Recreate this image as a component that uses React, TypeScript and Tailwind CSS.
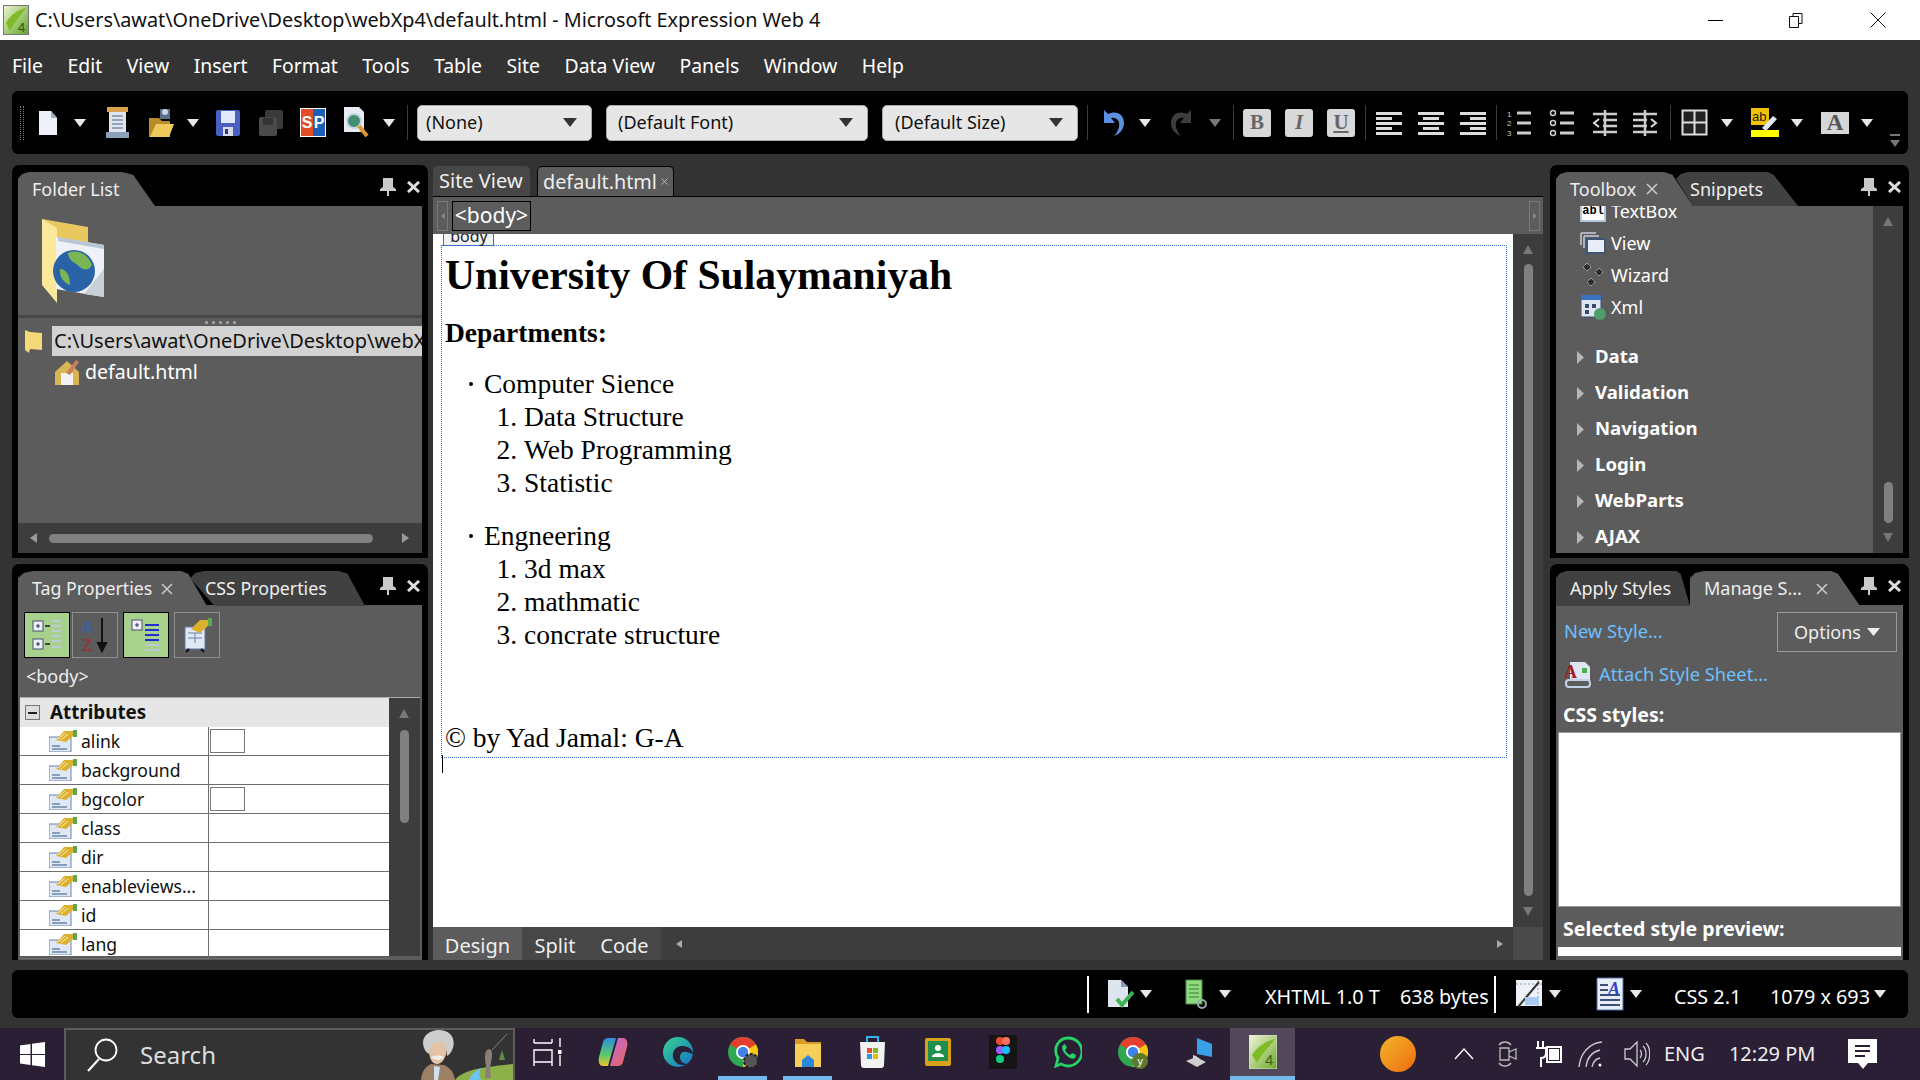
import type { ReactNode } from 'react';

function Caret({ className = 'ml-0', dim = false }: { className?: string; dim?: boolean }) {
  return (
    <svg width="12" height="10" viewBox="0 0 12 10" className={`shrink-0 ${className}`}>
      <path d="M0 1h12L6 9z" fill={dim ? '#777' : '#e8e8e8'} />
    </svg>
  );
}

function Sep({ className }: { className: string }) {
  return <div className={`h-[35px] w-px shrink-0 bg-[#3a3a3a] ${className}`} />;
}

function Combo({ label, className }: { label: string; className: string }) {
  return (
    <div className={`flex h-[36px] shrink-0 items-center justify-between rounded-[5px] border border-[#aaa] bg-[#e6e6e6] pr-[14px] text-[18px] text-[#111] ${className}`}>
      <span>{label}</span>
      <svg width="14" height="11" viewBox="0 0 14 11"><path d="M0 1h14L7 10z" fill="#333" /></svg>
    </div>
  );
}

function Lines({ className, rows }: { className: string; rows: [number, number][] }) {
  return (
    <svg width="26" height="26" viewBox="0 0 26 26" className={`shrink-0 ${className}`}>
      {rows.map(([x, w], i) => (
        <rect key={i} x={x} y={2 + i * 5} width={w} height="3" fill="#ddd" />
      ))}
    </svg>
  );
}

function Lettered({ letter, cls, className }: { letter: string; cls: string; className: string }) {
  return (
    <div className={`flex h-[28px] w-[28px] shrink-0 items-center justify-center rounded-[3px] bg-[#d9d9d9] font-['Liberation_Serif',serif] text-[21px] leading-none text-[#666] ${cls} ${className}`}>
      {letter}
    </div>
  );
}

function PagesIcon({ className }: { className: string }) {
  return (
    <svg width="20" height="26" viewBox="0 0 20 26" className={`shrink-0 ${className}`}>
      <path d="M1 1h12l6 7v17H1z" fill="#eef2f8" />
      <path d="M13 1l6 7h-6z" fill="#9fb0c6" />
    </svg>
  );
}

function Toolbar() {
  return (
    <div className="mx-3 flex h-[63px] shrink-0 items-center rounded-[6px] bg-black">
      <div className="ml-2 h-[34px] w-1 shrink-0 border-x border-dotted border-[#777]" />
      <PagesIcon className="ml-[14px]" />
      <Caret className="ml-[16px]" />
      <svg width="25" height="33" viewBox="0 0 25 33" className="ml-[19px] shrink-0">
        <rect x="2" y="1" width="21" height="5" fill="#d9a04f" />
        <rect x="4" y="6" width="17" height="20" fill="#dfe5ee" />
        <path d="M7 10h11M7 14h11M7 18h11M7 22h11" stroke="#7d8ea5" strokeWidth="1.5" />
        <rect x="1" y="26" width="23" height="6" fill="#8ca0ba" />
      </svg>
      <svg width="28" height="33" viewBox="0 0 28 33" className="ml-[17px] shrink-0">
        <path d="M2 12h10l3 3h8v16H2z" fill="#b88a2a" />
        <path d="M3 31l6-13h18l-5 13z" fill="#f0c95c" />
        <rect x="13" y="3" width="10" height="10" fill="#5d6f87" />
        <circle cx="18" cy="6" r="3" fill="#c9d4e4" />
      </svg>
      <Caret className="ml-[12px]" />
      <svg width="26" height="28" viewBox="0 0 26 28" className="ml-[16px] shrink-0">
        <rect x="1" y="1" width="24" height="26" rx="2" fill="#4a5fc2" />
        <rect x="6" y="2" width="14" height="12" fill="#e3e9fb" />
        <rect x="8" y="18" width="10" height="9" fill="#d6dbe8" />
        <rect x="10" y="20" width="3" height="5" fill="#2c3a80" />
      </svg>
      <svg width="26" height="28" viewBox="0 0 26 28" className="ml-[17px] shrink-0">
        <rect x="7" y="1" width="18" height="19" rx="2" fill="#3a3a3a" />
        <rect x="1" y="8" width="18" height="19" rx="2" fill="#4a4a4a" />
        <rect x="5" y="9" width="10" height="7" fill="#333" />
      </svg>
      <div className="ml-[16px] flex h-[29px] w-[26px] shrink-0 items-center overflow-hidden border border-white bg-[#e34d26] font-['Liberation_Sans',sans-serif] text-[16px] font-bold leading-none text-white">
        <span className="flex h-full w-1/2 items-center justify-center">S</span>
        <span className="flex h-full w-1/2 items-center justify-center bg-[#1c5fb8]">P</span>
      </div>
      <svg width="27" height="33" viewBox="0 0 27 33" className="ml-[17px] shrink-0">
        <path d="M1 1h15l5 5v20H1z" fill="#e8edf4" />
        <circle cx="11" cy="15" r="7" fill="#3f8f6e" stroke="#c5d2e2" strokeWidth="2" />
        <path d="M16 20l8 10" stroke="#d89a2c" strokeWidth="4" />
      </svg>
      <Caret className="ml-[13px]" />
      <Sep className="ml-[12px]" />
      <Combo label="(None)" className="ml-[9px] w-[175px] pl-2" />
      <Combo label="(Default Font)" className="ml-[14px] w-[262px] pl-[11px]" />
      <Combo label="(Default Size)" className="ml-[14px] w-[196px] pl-[12px]" />
      <Sep className="ml-[9px]" />
      <svg width="24" height="30" viewBox="0 0 24 30" className="ml-[13px] shrink-0">
        <path d="M3 2v13h11L10 10c6-1 9 3 8 9-1 4-3 7-5 9 6-2 10-7 10-13C23 6 15 2 7 6z" fill="#5b8fe0" />
      </svg>
      <Caret className="ml-[14px]" />
      <svg width="26" height="30" viewBox="0 0 26 30" className="ml-[18px] shrink-0">
        <path d="M22 2v13H11l4-5C9 9 6 13 7 19c1 4 3 7 5 9C6 26 2 21 2 15 2 6 10 2 18 6z" fill="#3d3d3d" />
      </svg>
      <Caret className="ml-[14px]" dim />
      <Sep className="ml-[12px]" />
      <Lettered letter="B" cls="font-bold" className="ml-[9px]" />
      <Lettered letter="I" cls="font-bold italic" className="ml-[14px]" />
      <Lettered letter="U" cls="font-bold underline" className="ml-[14px]" />
      <Sep className="ml-[10px]" />
      <Lines className="ml-[10px]" rows={[[0, 26], [0, 16], [0, 26], [0, 16], [0, 26]]} />
      <Lines className="ml-[16px]" rows={[[0, 26], [5, 16], [0, 26], [5, 16], [0, 26]]} />
      <Lines className="ml-[16px]" rows={[[0, 26], [10, 16], [0, 26], [10, 16], [0, 26]]} />
      <Sep className="ml-[10px]" />
      <svg width="26" height="28" viewBox="0 0 26 28" className="ml-[10px] shrink-0">
        <path d="M10 4h14M10 14h14M10 24h14" stroke="#ccc" strokeWidth="3" />
        <text x="0" y="8" fontSize="8" fill="#ccc" fontFamily="Liberation Sans">1</text>
        <text x="0" y="17" fontSize="8" fill="#ccc" fontFamily="Liberation Sans">2</text>
        <text x="0" y="27" fontSize="8" fill="#ccc" fontFamily="Liberation Sans">3</text>
      </svg>
      <svg width="26" height="28" viewBox="0 0 26 28" className="ml-[16px] shrink-0">
        <path d="M11 4h14M11 14h14M11 24h14" stroke="#ccc" strokeWidth="3" />
        <circle cx="4" cy="4" r="2.5" fill="none" stroke="#ccc" strokeWidth="1.5" />
        <circle cx="4" cy="14" r="2.5" fill="none" stroke="#ccc" strokeWidth="1.5" />
        <circle cx="4" cy="24" r="2.5" fill="none" stroke="#ccc" strokeWidth="1.5" />
      </svg>
      <svg width="26" height="28" viewBox="0 0 26 28" className="ml-[16px] shrink-0">
        <path d="M2 5h24M12 11h14M12 17h14M2 23h24M14 1v26" stroke="#ccc" strokeWidth="2.5" />
        <path d="M8 10l-5 4 5 4" stroke="#ddd" strokeWidth="2" fill="none" />
      </svg>
      <svg width="26" height="28" viewBox="0 0 26 28" className="ml-[16px] shrink-0">
        <path d="M0 5h24M0 11h14M0 17h14M0 23h24M12 1v26" stroke="#ccc" strokeWidth="2.5" />
        <path d="M18 10l5 4-5 4" stroke="#ddd" strokeWidth="2" fill="none" />
      </svg>
      <Sep className="ml-[11px]" />
      <svg width="27" height="27" viewBox="0 0 27 27" className="ml-[10px] shrink-0">
        <rect x="1.5" y="1.5" width="24" height="24" fill="#222" stroke="#ddd" strokeWidth="2" />
        <path d="M13.5 2v23M2 13.5h23" stroke="#ddd" strokeWidth="2" />
      </svg>
      <Caret className="ml-[13px]" />
      <svg width="28" height="29" viewBox="0 0 28 29" className="ml-[18px] shrink-0">
        <rect x="0" y="0" width="18" height="17" fill="#f2c200" />
        <text x="1" y="13" fontSize="13" fontFamily="Liberation Sans" fill="#222">ab</text>
        <path d="M11 20l11-12 4 3-11 12z" fill="#dfe9fb" />
        <rect x="0" y="22" width="28" height="7" fill="#ffff00" />
      </svg>
      <Caret className="ml-[12px]" />
      <div className="ml-[18px] flex h-[22px] w-[28px] shrink-0 items-center justify-center bg-[#d6d6d6] font-['Liberation_Serif',serif] text-[23px] font-bold leading-none text-[#555]">
        A
      </div>
      <Caret className="ml-[12px]" />
      <svg width="12" height="14" viewBox="0 0 12 14" className="ml-[16px] mt-[36px] shrink-0">
        <path d="M1 1h10" stroke="#777" strokeWidth="2" />
        <path d="M1 6h10L6 13z" fill="#777" />
      </svg>
    </div>
  );
}

function Pin() {
  return (
    <svg width="16" height="18" viewBox="0 0 16 18">
      <path d="M3 0h10v9l3 2v2H0v-2l3-2z" fill="#c9c9c9" />
      <rect x="7" y="13" width="2" height="5" fill="#c9c9c9" />
    </svg>
  );
}

function PanelClose() {
  return (
    <svg width="13" height="12" viewBox="0 0 13 12"><path d="M1 1l11 10M12 1L1 11" stroke="#dedede" strokeWidth="3" /></svg>
  );
}

function TabClose() {
  return (
    <svg width="12" height="12" viewBox="0 0 12 12" className="shrink-0"><path d="M1 1l10 10M11 1L1 11" stroke="#c8c8c8" strokeWidth="1.6" /></svg>
  );
}

function Panel({ tabs, body, className }: { tabs: ReactNode; body: ReactNode; className: string }) {
  return (
    <section className={`flex flex-col rounded-t-[7px] bg-black px-[6px] pt-[7px] ${className}`}>
      <div className="flex h-[34px] shrink-0 items-start justify-between">
        <div className="relative flex h-full">{tabs}</div>
        <div className="flex items-center gap-[11px] pr-[2px] pt-[6px]">
          <Pin />
          <PanelClose />
        </div>
      </div>
      {body}
    </section>
  );
}

function Scrollbar({ thumb, className, noDown = false }: { thumb: string; className: string; noDown?: boolean }) {
  return (
    <div className={`relative w-[30px] shrink-0 bg-[#3d3d3d] ${className}`}>
      <svg width="10" height="9" viewBox="0 0 10 9" className="absolute left-[10px] top-[11px]"><path d="M5 0l5 9H0z" fill="#777" /></svg>
      <div className={`absolute left-[11px] w-[9px] rounded-full bg-[#808080] ${thumb}`} />
      {!noDown && (
        <svg width="10" height="9" viewBox="0 0 10 9" className="absolute bottom-[11px] left-[10px]"><path d="M5 9L0 0h10z" fill="#777" /></svg>
      )}
    </div>
  );
}

function FolderPanel() {
  return (
    <Panel
      className="h-[393px] pb-[5px]"
      tabs={
        <div className="flex h-[34px] w-[137px] items-center bg-[#5c5c5c] pl-[14px] text-[18px] text-[#eee] [clip-path:polygon(0_20%,3%_6%,8%_0,76%_0,84%_8%,100%_100%,0_100%)]">
          Folder List
        </div>
      }
      body={
        <div className="flex min-h-0 flex-1 flex-col bg-[#5c5c5c]">
          <div className="flex h-[112px] shrink-0 border-b-[3px] border-[#474747] pl-6 pt-[13px]">
            <svg width="62" height="84" viewBox="0 0 62 84">
              <path d="M0 0l46 8v60L0 60z" fill="#e9c85f" />
              <path d="M0 0l15 9v75L0 66z" fill="#fbe89b" />
              <path d="M14 18l48 8v52l-48-8z" fill="#eef2f6" />
              <path d="M16 18l46 8v4l-46-8z" fill="#b8c6d6" />
              <path d="M62 50v28l-20-3z" fill="#c9cfd6" />
              <circle cx="32" cy="52" r="21" fill="#2a62a8" />
              <path d="M26 34c8-4 20 0 24 12-3 6-9 5-12 2-4-4-12-6-12-14zM18 50c6 0 10 6 10 16-6-2-11-8-10-16z" fill="#7bb656" />
            </svg>
          </div>
          <div className="flex h-[8px] justify-center gap-[4px] pt-[3px]">
            {[0, 1, 2, 3, 4].map((i) => <div key={i} className="h-[3px] w-[3px] bg-[#9a9a9a]" />)}
          </div>
          <div className="flex h-[30px] shrink-0 items-center pl-[7px]">
            <svg width="18" height="24" viewBox="0 0 18 24" className="shrink-0"><path d="M0 1l5 2 12 1v17L5 20l-1 4-4-3z" fill="#f5d877" /></svg>
            <div className="ml-[9px] flex h-full min-w-0 flex-1 items-center overflow-hidden whitespace-nowrap bg-[#d2d2d2] pl-[2px] text-[20px] text-[#111]">
              C:\Users\awat\OneDrive\Desktop\webX
            </div>
          </div>
          <div className="flex h-[32px] shrink-0 items-center pl-[36px]">
            <svg width="26" height="28" viewBox="0 0 26 28" className="shrink-0">
              <path d="M1 14L13 3l12 11v13H1z" fill="#d8b554" />
              <rect x="7" y="15" width="12" height="12" fill="#f2f2f2" />
              <path d="M12 15L22 2l3 2-9 13z" fill="#c97f5a" />
            </svg>
            <span className="ml-[5px] text-[19.6px] text-white">default.html</span>
          </div>
          <div className="mt-auto flex h-[30px] shrink-0 items-center bg-[#3d3d3d] pl-[12px]">
            <svg width="7" height="10" viewBox="0 0 7 10" className="shrink-0"><path d="M7 0v10L0 5z" fill="#999" /></svg>
            <div className="ml-[12px] h-[9px] w-[324px] rounded-full bg-[#808080]" />
            <svg width="7" height="10" viewBox="0 0 7 10" className="ml-[29px] shrink-0"><path d="M0 0v10l7-5z" fill="#999" /></svg>
          </div>
        </div>
      }
    />
  );
}

function AttrIcon() {
  return (
    <svg width="28" height="22" viewBox="0 0 28 22" className="shrink-0">
      <rect x="0" y="7" width="22" height="15" fill="#dfe8f4" stroke="#6a84a8" />
      <path d="M3 16h8M3 19h15" stroke="#6a84a8" strokeWidth="1.5" />
      <path d="M7 10L15 1h10v4l-8 7z" fill="#dcb02f" />
      <rect x="24" y="0" width="4" height="7" fill="#5fa84a" />
      <path d="M9 9l7-6M12 10l7-6" stroke="#fff2b8" />
    </svg>
  );
}

const attrs: [string, boolean][] = [
  ['alink', true], ['background', false], ['bgcolor', true], ['class', false],
  ['dir', false], ['enableviews...', false], ['id', false], ['lang', false],
];

function PropButton({ on, children, className }: { on: boolean; children: ReactNode; className: string }) {
  return (
    <div className={`flex h-[46px] w-[46px] shrink-0 items-center justify-center border ${on ? 'border-black bg-[#a9d18e]' : 'border-[#8f8f8f]'} ${className}`}>
      {children}
    </div>
  );
}

function TagPanel() {
  return (
    <Panel
      className="h-[396px]"
      tabs={
        <>
          <div className="absolute left-[172px] top-0 flex h-[35px] w-[175px] items-center whitespace-nowrap bg-[#414141] pl-[15px] text-[17.8px] text-[#eee] [clip-path:polygon(0_20%,3%_6%,8%_0,85%_0,90%_8%,100%_100%,14%_100%)]">
            CSS Properties
          </div>
          <div className="relative flex h-[35px] w-[189px] items-center gap-[9px] whitespace-nowrap bg-[#5c5c5c] pl-[14px] text-[17.8px] text-[#eee] [clip-path:polygon(0_20%,3%_6%,8%_0,86%_0,90%_8%,100%_100%,0_100%)]">
            Tag Properties
            <TabClose />
          </div>
        </>
      }
      body={
        <div className="flex min-h-0 flex-1 flex-col overflow-hidden bg-[#5c5c5c] pb-1">
          <div className="flex shrink-0 pl-[6px] pt-[7px]">
            <PropButton on className="">
              <svg width="30" height="36" viewBox="0 0 30 36">
                <rect x="1" y="4" width="10" height="10" fill="#eef" stroke="#456" />
                <rect x="1" y="22" width="10" height="10" fill="#eef" stroke="#456" />
                <path d="M4 9h4M6 7v4M4 27h4M6 25v4" stroke="#234" />
                <path d="M13 9h5M13 27h5" stroke="#444" strokeWidth="2" />
                <path d="M20 4h9M20 9h9M20 14h9M20 19h9M20 24h9M20 30h9" stroke="#b9cdd0" strokeWidth="2" />
              </svg>
            </PropButton>
            <PropButton on={false} className="ml-[2px]">
              <svg width="30" height="36" viewBox="0 0 30 36">
                <text x="1" y="16" fontSize="17" fontWeight="bold" fill="#3e5f9d" fontFamily="Liberation Sans">A</text>
                <text x="2" y="34" fontSize="17" fontWeight="bold" fill="#8c3a3a" fontFamily="Liberation Sans">Z</text>
                <path d="M22 1v30M18 26l4 8 4-8z" stroke="#111" strokeWidth="2" fill="#111" />
              </svg>
            </PropButton>
            <PropButton on className="ml-[5px]">
              <svg width="30" height="32" viewBox="0 0 30 32">
                <rect x="1" y="1" width="10" height="10" fill="#eef" stroke="#456" />
                <path d="M4 6h4M6 4v4" stroke="#234" />
                <path d="M14 6h14M14 11h14M14 16h14M14 21h14" stroke="#1f2fd0" strokeWidth="2" />
                <path d="M14 26h14M14 31h14" stroke="#b9cdd0" strokeWidth="2" />
              </svg>
            </PropButton>
            <PropButton on={false} className="ml-[5px]">
              <svg width="30" height="36" viewBox="0 0 30 36">
                <rect x="3" y="10" width="20" height="22" fill="#dfe8f4" stroke="#5c7ba8" />
                <path d="M6 16h14M6 21h14M13 16v10" stroke="#6a84a8" />
                <path d="M9 12L18 3h9v5l-9 8z" fill="#dcb02f" />
                <rect x="26" y="1" width="4" height="8" fill="#5fa84a" />
                <path d="M7 32l-3 3M19 32l3 3" stroke="#111" strokeWidth="2" />
              </svg>
            </PropButton>
          </div>
          <div className="flex h-[39px] shrink-0 items-center pb-[2px] pl-2 text-[18px] text-[#eee]">&lt;body&gt;</div>
          <div className="ml-[2px] mr-[2px] flex min-h-0 flex-1 border-t border-[#aaa]">
            <div className="min-w-0 flex-1 bg-white text-[17.6px] text-[#111]">
              <div className="flex h-[29px] items-center bg-[#e6e6e6] pl-[5px]">
                <div className="flex h-[15px] w-[15px] items-center justify-center border border-[#777] bg-[#ddd]">
                  <div className="h-[2px] w-[9px] bg-[#222]" />
                </div>
                <span className="ml-[10px] text-[18.8px] font-bold">Attributes</span>
              </div>
              {attrs.map(([name, swatch]) => (
                <div key={name} className="flex h-[29px] border-b border-[#6e6e6e]">
                  <div className="flex w-[189px] items-center border-r border-[#6e6e6e] pl-[29px]">
                    <AttrIcon />
                    <span className="ml-[4px]">{name}</span>
                  </div>
                  {swatch && <div className="ml-[1px] mt-[2px] h-[24px] w-[35px] border border-[#777] bg-white" />}
                </div>
              ))}
            </div>
            <Scrollbar className="w-[31px]" thumb="top-[32px] h-[93px]" noDown />
          </div>
        </div>
      }
    />
  );
}

function CenterPane() {
  return (
    <div className="ml-[5px] flex h-full w-[1110px] shrink-0 flex-col pt-px">
      <div className="flex h-[31px] shrink-0 items-end border-b border-black text-[20px] leading-none text-[#eee]">
        <div className="flex h-[30px] w-[97px] items-center rounded-t-[5px] bg-[#474747] pl-[6px]">Site View</div>
        <div className="ml-[7px] flex h-[30px] w-[137px] items-center rounded-t-[5px] border-x border-t border-black bg-[#5c5c5c] pl-[5px] text-[19.8px]">
          default.html
          <svg width="7" height="7" viewBox="0 0 7 7" className="ml-[4px] shrink-0"><path d="M0.5 0.5l6 6M6.5 0.5l-6 6" stroke="#bbb" /></svg>
        </div>
      </div>
      <div className="flex h-[37px] shrink-0 items-center bg-[#5c5c5c] pl-[4px] pr-[3px]">
        <div className="flex h-[30px] w-[11px] items-center justify-center border border-[#777]">
          <svg width="4" height="6" viewBox="0 0 4 6"><path d="M4 0v6L0 3z" fill="#888" /></svg>
        </div>
        <div className="ml-[4px] flex h-[30px] w-[79px] items-center justify-center border border-black text-[21px] text-white">&lt;body&gt;</div>
        <div className="ml-auto flex h-[30px] w-[11px] items-center justify-center border border-[#777]">
          <svg width="4" height="6" viewBox="0 0 4 6"><path d="M0 0v6l4-3z" fill="#888" /></svg>
        </div>
      </div>
      <div className="flex min-h-0 flex-1">
        <div className="flex min-w-0 flex-1 flex-col">
          <div className="relative min-h-0 flex-1 overflow-hidden bg-white pl-2 pt-[11px] font-['Liberation_Serif',serif] text-black">
            <div className="absolute left-[10px] top-[-7px] flex h-[19px] w-[51px] items-end justify-center border border-[#3b6fc0] bg-[#f2f2f2] pl-px font-['Noto_Sans',sans-serif] text-[16px] leading-[18px] text-[#222]">body</div>
            <div className="h-[513px] w-[1066px] border border-dotted border-[#3b6fc0] pl-[3px]">
              <h1 className="mt-[6px] text-[41.7px] font-bold leading-[46px]">University Of Sulaymaniyah</h1>
              <h2 className="mt-[19px] text-[27.5px] font-bold leading-[32px]">Departments:</h2>
              <div className="mt-[18px] text-[27.5px] leading-[33px]">
                <div className="flex items-center"><span className="ml-[24px] mr-[11px] h-[4px] w-[4px] rounded-full bg-black" />Computer Sience</div>
                <ol className="list-decimal pl-[79px]">
                  <li>Data Structure</li>
                  <li>Web Programming</li>
                  <li>Statistic</li>
                </ol>
                <div className="mt-[20px] flex items-center"><span className="ml-[24px] mr-[11px] h-[4px] w-[4px] rounded-full bg-black" />Engneering</div>
                <ol className="list-decimal pl-[79px]">
                  <li>3d max</li>
                  <li>mathmatic</li>
                  <li>concrate structure</li>
                </ol>
                <p className="mt-[70px]">© by Yad Jamal: G-A</p>
              </div>
            </div>
            <div className="ml-[1px] mt-[-3px] h-[18px] w-px bg-black" />
          </div>
          <div className="flex h-[33px] shrink-0 items-center bg-[#3d3d3d] text-[20px] text-[#eee]">
            <div className="flex h-full w-[89px] items-center justify-center bg-[#5c5c5c] pt-[4px]">Design</div>
            <div className="flex h-full w-[66px] items-center justify-center bg-[#474747] pt-[4px]">Split</div>
            <div className="flex h-full w-[73px] items-center justify-center bg-[#474747] pt-[4px]">Code</div>
            <svg width="6" height="8" viewBox="0 0 6 8" className="ml-[15px]"><path d="M6 0v8L0 4z" fill="#aaa" /></svg>
            <svg width="6" height="8" viewBox="0 0 6 8" className="ml-auto mr-[10px]"><path d="M0 0v8l6-4z" fill="#aaa" /></svg>
          </div>
        </div>
        <div className="flex w-[30px] shrink-0 flex-col">
          <Scrollbar className="min-h-0 flex-1" thumb="top-[30px] h-[632px]" />
          <div className="h-[33px] bg-[#4a4a4a]" />
        </div>
      </div>
    </div>
  );
}

function ToolRow({ label, icon }: { label: string; icon: ReactNode }) {
  return (
    <div className="flex h-[32px] items-center">
      <div className="flex w-[26px] justify-center">{icon}</div>
      <span className="ml-[5px] text-[18px] text-white">{label}</span>
    </div>
  );
}

const groups = ['Data', 'Validation', 'Navigation', 'Login', 'WebParts', 'AJAX'];

function ToolboxPanel() {
  return (
    <Panel
      className="h-[393px] pb-[5px]"
      tabs={
        <>
          <div className="absolute left-[120px] top-0 flex h-[34px] w-[122px] items-center bg-[#414141] pl-[14px] text-[18px] text-[#eee] [clip-path:polygon(0_20%,4%_6%,10%_0,75%_0,80%_8%,100%_100%,14%_100%)]">
            Snippets
          </div>
          <div className="relative flex h-[34px] w-[137px] items-center gap-[10px] bg-[#5c5c5c] pl-[14px] text-[18px] text-[#eee] [clip-path:polygon(0_20%,3%_6%,8%_0,79%_0,85%_8%,100%_100%,0_100%)]">
            Toolbox
            <TabClose />
          </div>
        </>
      }
      body={
        <div className="flex min-h-0 flex-1 bg-[#5c5c5c]">
          <div className="relative min-w-0 flex-1 overflow-hidden pl-[24px]">
            <div className="mt-[-11px]">
              <ToolRow
                label="TextBox"
                icon={<div className="flex h-[22px] w-[26px] items-center justify-center border-2 border-[#b4c6dc] bg-white font-['Liberation_Mono',monospace] text-[12px] font-bold leading-none text-black">abl</div>}
              />
              <ToolRow
                label="View"
                icon={
                  <svg width="26" height="22" viewBox="0 0 26 22">
                    <path d="M1 1h15M1 1v12M4 4h15M4 4v12" stroke="#ccd" strokeWidth="1.5" fill="none" />
                    <rect x="7" y="7" width="18" height="14" fill="#e8ecf6" stroke="#3e5578" strokeWidth="2" />
                  </svg>
                }
              />
              <ToolRow
                label="Wizard"
                icon={
                  <svg width="22" height="24" viewBox="0 0 22 24">
                    <path d="M5 0l4 4-4 4-4-4zM17 5l4 4-4 4-4-4zM9 15l4 4-4 4-4-4z" fill="#2d2d2d" stroke="#ddd" strokeDasharray="1 1" />
                  </svg>
                }
              />
              <ToolRow
                label="Xml"
                icon={
                  <svg width="25" height="25" viewBox="0 0 25 25">
                    <rect x="0" y="0" width="20" height="22" fill="#dfe6f2" stroke="#35507c" />
                    <rect x="0" y="0" width="20" height="5" fill="#3a71c2" />
                    <path d="M4 9h4v4H4zM11 9h4v4h-4zM4 15h4v4H4z" fill="#354b70" />
                    <circle cx="19" cy="19" r="6" fill="#4e9d6a" />
                  </svg>
                }
              />
            </div>
            <div className="mt-[15px]">
              {groups.map((g) => (
                <div key={g} className="-ml-[3px] flex h-[36px] items-center">
                  <svg width="7" height="13" viewBox="0 0 7 13" className="mt-[3px] shrink-0"><path d="M0 0l7 6.5L0 13z" fill="#b5b5b5" /></svg>
                  <span className="ml-[11px] text-[18.6px] font-bold text-white">{g}</span>
                </div>
              ))}
            </div>
          </div>
          <Scrollbar thumb="top-[276px] h-[41px]" />
        </div>
      }
    />
  );
}

function StylesPanel() {
  return (
    <Panel
      className="h-[396px]"
      tabs={
        <>
          <div className="relative flex h-[35px] w-[134px] items-center bg-[#414141] pl-[14px] text-[18px] text-[#eee] [clip-path:polygon(0_20%,3%_6%,8%_0,90%_0,93%_8%,100%_100%,0_100%)]">
            Apply Styles
          </div>
          <div className="flex h-[35px] w-[170px] items-center gap-[14px] whitespace-nowrap bg-[#5c5c5c] pl-[14px] text-[18px] text-[#eee] [clip-path:polygon(0_20%,3%_6%,8%_0,83%_0,87%_8%,100%_100%,0_100%)]">
            Manage S...
            <TabClose />
          </div>
        </>
      }
      body={
        <div className="flex min-h-0 flex-1 flex-col overflow-hidden bg-[#5c5c5c] pb-1">
          <div className="flex h-[47px] shrink-0 items-start justify-between pl-2 pr-[6px] pt-[7px]">
            <span className="pt-[5px] text-[18.3px] text-[#6cc0ff]">New Style...</span>
            <div className="flex h-[40px] w-[120px] items-center justify-center gap-[6px] border border-[#999] text-[18px] text-[#eee]">
              Options
              <svg width="13" height="8" viewBox="0 0 13 8"><path d="M0 0h13L6.5 8z" fill="#eee" /></svg>
            </div>
          </div>
          <div className="flex h-[44px] shrink-0 items-center pl-2">
            <svg width="27" height="28" viewBox="0 0 27 28" className="shrink-0">
              <path d="M6 2h15l5 5v14H6z" fill="#dfe6f2" />
              <text x="0" y="18" fontSize="18" fontWeight="bold" fontFamily="Liberation Serif" fill="#a11d1d">A</text>
              <rect x="18" y="8" width="5" height="5" fill="#4caf50" />
              <rect x="2" y="20" width="24" height="7" rx="3" fill="none" stroke="#c5d2e6" strokeWidth="2" />
            </svg>
            <span className="ml-[8px] text-[18.3px] text-[#6cc0ff]">Attach Style Sheet...</span>
          </div>
          <div className="flex h-[36px] shrink-0 items-center pl-[7px] pt-[2px] text-[19.5px] font-bold text-white">CSS styles:</div>
          <div className="mx-[2px] h-[175px] shrink-0 border border-[#999] bg-white" />
          <div className="flex h-[40px] shrink-0 items-center pl-[7px] pt-[3px] text-[19.5px] font-bold text-white">Selected style preview:</div>
          <div className="mx-[2px] min-h-0 flex-1 bg-white" />
        </div>
      }
    />
  );
}

function StatusBar() {
  return (
    <div className="mx-3 mt-[10px] flex h-[48px] shrink-0 items-center rounded-[6px] bg-black text-[19.8px] text-white">
      <div className="ml-[1075px] h-[37px] w-[2px] shrink-0 bg-white" />
      <svg width="28" height="30" viewBox="0 0 28 30" className="ml-[18px] shrink-0">
        <path d="M1 1h13l7 7v20H1z" fill="#dfe5ee" />
        <path d="M14 1l7 7h-7z" fill="#8b9bb0" />
        <path d="M10 20l5 6 11-13" stroke="#3fb34f" strokeWidth="4" fill="none" />
      </svg>
      <Caret className="ml-[5px]" />
      <svg width="22" height="30" viewBox="0 0 22 30" className="ml-[33px] shrink-0">
        <rect x="1" y="1" width="16" height="24" fill="#8edb80" stroke="#4d8b45" />
        <path d="M4 6h10M4 10h10M4 14h10M4 18h10" stroke="#3b7a35" />
        <circle cx="17" cy="25" r="4" fill="none" stroke="#9aa" strokeWidth="2" />
      </svg>
      <Caret className="ml-[12px]" />
      <span className="ml-[34px] w-[135px] shrink-0 whitespace-nowrap pt-[5px]">XHTML 1.0 T</span>
      <span className="w-[94px] shrink-0 whitespace-nowrap pt-[5px]">638 bytes</span>
      <div className="h-[37px] w-[2px] shrink-0 bg-white" />
      <svg width="28" height="30" viewBox="0 0 28 30" className="ml-[19px] shrink-0">
        <rect x="1" y="1" width="26" height="26" fill="#eef2f8" />
        <path d="M1 5h26M23 1v26" stroke="#8a98aa" strokeDasharray="2 2" />
        <path d="M3 28L24 3" stroke="#333" strokeWidth="2" />
        <rect x="10" y="18" width="14" height="8" fill="#a9cdf2" />
      </svg>
      <Caret className="ml-[6px]" />
      <svg width="28" height="34" viewBox="0 0 28 34" className="ml-[35px] shrink-0">
        <rect x="1" y="1" width="26" height="32" fill="#e8edf6" stroke="#4b6ea8" />
        <path d="M4 8h8M4 13h8M4 18h20M4 23h20M4 28h20" stroke="#3b4f78" strokeWidth="2" />
        <text x="12" y="18" fontSize="18" fontWeight="bold" fontFamily="Liberation Serif" fontStyle="italic" fill="#2846c8">A</text>
      </svg>
      <Caret className="ml-[6px]" />
      <span className="ml-[32px] w-[96px] shrink-0 whitespace-nowrap pt-[5px]">CSS 2.1</span>
      <span className="w-[104px] shrink-0 whitespace-nowrap pt-[5px]">1079 x 693</span>
      <Caret />
    </div>
  );
}

function TaskSlot({ children, active = false, open = false }: { children: ReactNode; active?: boolean; open?: boolean }) {
  return (
    <div className={`relative flex h-full w-[65px] shrink-0 items-center justify-center pb-1 ${active ? 'bg-[#514859]' : ''}`}>
      {children}
      {(open || active) && <div className={`absolute bottom-0 h-1 bg-[#76b9ed] ${active ? 'inset-x-0' : 'inset-x-2'}`} />}
    </div>
  );
}

function Chrome({ badge }: { badge: 'gear' | 'y' }) {
  return (
    <svg width="30" height="36" viewBox="0 0 30 36">
      <circle cx="15" cy="18" r="15" fill="#2fa84f" />
      <path d="M15 18L2 10.5A15 15 0 0 1 28 10.5z" fill="#e5402f" />
      <path d="M15 18l13-7.5A15 15 0 0 1 15 33z" fill="#f9c512" />
      <circle cx="15" cy="18" r="7" fill="#fff" />
      <circle cx="15" cy="18" r="5.2" fill="#3f82ee" />
      {badge === 'gear' ? (
        <circle cx="23" cy="27" r="7" fill="#555" stroke="#222" strokeWidth="2" strokeDasharray="3 1.5" />
      ) : (
        <>
          <circle cx="22" cy="27" r="8" fill="#5d7a2c" />
          <text x="19.5" y="31" fontSize="11" fill="#fff" fontFamily="Liberation Sans">y</text>
        </>
      )}
    </svg>
  );
}

function Taskbar() {
  return (
    <div className="mt-[10px] flex h-[52px] shrink-0 items-center bg-[#2a1f35] text-white">
      <div className="flex h-full w-[64px] shrink-0 items-center justify-center">
        <svg width="25" height="25" viewBox="0 0 25 25">
          <path d="M0 3.5l10.5-1.5v10H0zM12 1.8L25 0v12H12zM0 13h10.5v10L0 21.5zM12 13h13v12l-13-1.8z" fill="#fff" />
        </svg>
      </div>
      <div className="relative flex h-full w-[451px] shrink-0 items-center overflow-hidden border-x-2 border-t-2 border-[#5c5c5c] bg-[#333] pl-[20px]">
        <svg width="32" height="34" viewBox="0 0 32 34" className="shrink-0">
          <circle cx="20" cy="12" r="10.5" fill="none" stroke="#fff" strokeWidth="1.8" />
          <path d="M13 21L2 33" stroke="#fff" strokeWidth="2" />
        </svg>
        <span className="ml-[22px] text-[24px] text-[#ddd]">Search</span>
        <svg width="92" height="50" viewBox="0 0 92 50" className="absolute bottom-0 right-0">
          <path d="M34 50c8-10 24-12 58-16v16z" fill="#8db04a" />
          <path d="M48 50c2-6 8-10 12-12-2 5-2 8 0 12z" fill="#6cc4f0" />
          <path d="M0 50c1-9 4-13 10-16l13 1c7 3 10 8 11 15z" fill="#9d8064" />
          <path d="M13 36l6 1-2 13h-4z" fill="#cfe0f2" />
          <path d="M8 20c0-10 3-14 10-14 6 0 9 5 8 13-1 9-5 15-10 15-5 0-8-6-8-14z" fill="#e4c2a5" />
          <path d="M3 18C-1 7 8 0 18 0c10 0 17 7 14 18-2 5-4 7-6 8 0-8-1-13-6-14-5 1-9 0-10 4l-2 8c-2-1-4-3-5-6z" fill="#cdcdcd" />
          <path d="M10 27c3-2 10-2 13 0-2 4-10 4-13 0z" fill="#ececec" />
          <path d="M65 36c-1-7-2-12 1-16 3-2 5 0 5 4 0 5-1 8-2 14l1 10h-6z" fill="#8a8078" />
          <path d="M71 20L86 4" stroke="#8a8078" strokeWidth="1" />
          <path d="M78 30l3-10 3 10z" fill="#5f8c4a" />
        </svg>
      </div>
      <TaskSlot>
        <svg width="29" height="28" viewBox="0 0 29 28" fill="none" stroke="#fff" strokeWidth="1.4">
          <path d="M1 5V1M19 5V1M1 5h18M1 12h18v12H1zM1 28v-4M19 28v-4M1 24h18M27 0v9M27 17v11" />
          <rect x="25" y="12" width="3.5" height="4" fill="#fff" stroke="none" />
        </svg>
      </TaskSlot>
      <TaskSlot>
        <svg width="30" height="30" viewBox="0 0 30 30">
          <defs>
            <linearGradient id="cpa" x1="0" y1="0" x2="0" y2="1"><stop offset="0" stopColor="#2f8ce0" /><stop offset="0.6" stopColor="#58c96a" /><stop offset="1" stopColor="#f3c52e" /></linearGradient>
            <linearGradient id="cpb" x1="0" y1="0" x2="1" y2="1"><stop offset="0" stopColor="#b36cf0" /><stop offset="1" stopColor="#f0654a" /></linearGradient>
          </defs>
          <path d="M10 1h8L10 29H5C1 29 0 24 1 20L5 5C6 2 8 1 10 1z" fill="url(#cpa)" />
          <path d="M20 29h-8l8-28h5c4 0 5 5 4 9l-4 15c-1 3-3 4-5 4z" fill="url(#cpb)" />
        </svg>
      </TaskSlot>
      <TaskSlot>
        <svg width="30" height="30" viewBox="0 0 30 30">
          <defs><linearGradient id="edg" x1="0" y1="0" x2="1" y2="1"><stop offset="0" stopColor="#38d68f" /><stop offset="1" stopColor="#1471c8" /></linearGradient></defs>
          <circle cx="15" cy="15" r="15" fill="url(#edg)" />
          <path d="M30 17c-1-6-6-8-11-8-6 0-10 5-9 11 1 6 8 10 15 7-4 0-8-2-8-7 0-4 3-6 6-5 3 0 5 2 7 2z" fill="#2a1f35" />
        </svg>
      </TaskSlot>
      <TaskSlot open><Chrome badge="gear" /></TaskSlot>
      <TaskSlot open>
        <svg width="26" height="30" viewBox="0 0 26 30">
          <path d="M0 2h9l3 3h14v4H0z" fill="#d99a27" />
          <rect x="0" y="7" width="26" height="23" fill="#f6cf5a" />
          <path d="M7 23l6-5 6 5v7H7z" fill="#2b87d8" />
        </svg>
      </TaskSlot>
      <TaskSlot>
        <svg width="27" height="32" viewBox="0 0 27 32">
          <path d="M8 6V1h11v5" fill="none" stroke="#35b0ea" strokeWidth="2" />
          <path d="M1 6h25l-1 23c0 2-1 3-3 3H5c-2 0-3-1-3-3z" fill="#f2f2f2" />
          <rect x="8" y="12" width="5" height="5" fill="#e3512d" /><rect x="14" y="12" width="5" height="5" fill="#7fba2a" />
          <rect x="8" y="18" width="5" height="5" fill="#2a9ae0" /><rect x="14" y="18" width="5" height="5" fill="#f5b800" />
        </svg>
      </TaskSlot>
      <TaskSlot>
        <svg width="26" height="30" viewBox="0 0 26 30">
          <rect x="0" y="1" width="26" height="28" rx="2" fill="#d9a21b" />
          <rect x="3" y="4" width="20" height="20" fill="#1e8f4e" />
          <circle cx="13" cy="11" r="3" fill="#fff" />
          <path d="M7 20c0-5 12-5 12 0z" fill="#fff" />
        </svg>
      </TaskSlot>
      <TaskSlot>
        <svg width="28" height="34" viewBox="0 0 28 34">
          <rect x="0" y="0" width="28" height="34" fill="#151515" />
          <circle cx="11" cy="6" r="4" fill="#ee4b2b" /><circle cx="17" cy="6" r="4" fill="#ff7262" />
          <circle cx="11" cy="15" r="4" fill="#a259ff" /><circle cx="17" cy="15" r="4" fill="#1abcfe" />
          <circle cx="11" cy="24" r="4" fill="#0acf83" />
        </svg>
      </TaskSlot>
      <TaskSlot>
        <svg width="28" height="32" viewBox="0 0 28 32">
          <path d="M2 30l2-8C-2 12 5 2 14 2s14 7 14 14-6 14-14 14c-2 0-5-1-7-2z" fill="none" stroke="#25d366" strokeWidth="2.8" />
          <path d="M9 9c-2 3 0 7 3 10s7 5 9 3l1-3-4-2-2 2c-2-1-4-3-5-5l2-2-2-4z" fill="#25d366" />
        </svg>
      </TaskSlot>
      <TaskSlot><Chrome badge="y" /></TaskSlot>
      <TaskSlot>
        <svg width="28" height="30" viewBox="0 0 28 30">
          <path d="M13 1L28 7v13l-15-3z" fill="#3aa0ea" />
          <path d="M9 18v5l5 2 2-3-4-3z" fill="#d8d8d8" />
          <path d="M2 24l10-4 10 5-9 5z" fill="#cfcfcf" />
        </svg>
      </TaskSlot>
      <TaskSlot active>
        <svg width="28" height="34" viewBox="0 0 28 34">
          <defs><linearGradient id="ewb" x1="0" y1="0" x2="1" y2="1"><stop offset="0" stopColor="#f0f7da" /><stop offset="1" stopColor="#6ea82a" /></linearGradient></defs>
          <rect x="0" y="0" width="28" height="34" fill="url(#ewb)" stroke="#ddd" />
          <path d="M3 20C10 10 18 6 26 4 20 12 12 20 8 28z" fill="#7fbb26" />
          <text x="16" y="30" fontSize="15" fontFamily="Liberation Sans" fill="#3a5f12">4</text>
        </svg>
      </TaskSlot>
      <div className="ml-[85px] h-[36px] w-[36px] shrink-0 rounded-full bg-gradient-to-br from-[#f0b52a] to-[#ee6a10]" />
      <svg width="20" height="12" viewBox="0 0 20 12" fill="none" stroke="#fff" strokeWidth="1.4" className="ml-[38px] shrink-0"><path d="M1 11L10 1l9 10" /></svg>
      <svg width="20" height="28" viewBox="0 0 20 28" fill="none" stroke="#bbb" strokeWidth="1.3" className="ml-[24px] shrink-0">
        <path d="M1 5c3-4 9-4 12 0M1 23c3 4 9 4 12 0M2 8h9v12H2zM11 12l7-3v10l-7-3" />
      </svg>
      <svg width="28" height="26" viewBox="0 0 28 26" className="ml-[17px] shrink-0">
        <path d="M3 0v7M8 0v7M1 7h10v5c0 3-2 5-5 5v9" stroke="#fff" strokeWidth="2" fill="none" />
        <rect x="12" y="6" width="14" height="15" fill="none" stroke="#fff" strokeWidth="2" />
        <rect x="14" y="8" width="10" height="11" fill="#fff" />
      </svg>
      <svg width="28" height="26" viewBox="0 0 28 26" fill="none" stroke="#ccc" strokeWidth="1.3" className="ml-[15px] shrink-0">
        <path d="M1 26C2 13 11 2 24 1M8 26c1-9 6-15 14-17M14 26c1-5 3-8 8-9" />
        <circle cx="22" cy="24" r="1.5" fill="#fff" stroke="none" />
      </svg>
      <svg width="26" height="28" viewBox="0 0 26 28" fill="none" stroke="#ccc" strokeWidth="1.3" className="ml-[18px] shrink-0">
        <path d="M1 9h5l7-7v24l-7-7H1zM16 10c2 2 2 6 0 8M19 6c4 4 4 12 0 16M22 3c5 5 5 17 0 22" />
      </svg>
      <span className="ml-[14px] text-[20px] text-[#eee]">ENG</span>
      <span className="ml-[24px] text-[20px] text-[#eee]">12:29 PM</span>
      <svg width="29" height="30" viewBox="0 0 29 30" className="ml-[33px] shrink-0">
        <path d="M0 0h29v24h-9l-5 6-5-6H0z" fill="#fff" />
        <path d="M7 7h15M7 12h15M7 17h10" stroke="#2a1f35" strokeWidth="2" />
      </svg>
    </div>
  );
}

export default function App() {
  const menus = ['File', 'Edit', 'View', 'Insert', 'Format', 'Tools', 'Table', 'Site', 'Data View', 'Panels', 'Window', 'Help'];
  return (
    <div className="flex h-[1080px] w-[1920px] flex-col overflow-hidden bg-[#333333] font-['Noto_Sans',sans-serif]">
      <div className="flex h-[40px] shrink-0 items-center bg-white pl-[3px]">
        <svg width="26" height="30" viewBox="0 0 26 30" className="shrink-0">
          <defs><linearGradient id="tbi" x1="0" y1="0" x2="1" y2="1"><stop offset="0" stopColor="#eff6d5" /><stop offset="1" stopColor="#5fa326" /></linearGradient></defs>
          <rect x="0.5" y="0.5" width="25" height="29" fill="url(#tbi)" stroke="#777" />
          <path d="M3 18C8 9 15 5 23 3 18 10 11 18 7 26z" fill="#7fbb26" />
          <text x="15" y="27" fontSize="13" fontFamily="Liberation Sans" fill="#33530f">4</text>
        </svg>
        <span className="ml-[6px] text-[19.8px] text-[#111]">C:\Users\awat\OneDrive\Desktop\webXp4\default.html - Microsoft Expression Web 4</span>
        <div className="ml-auto flex items-center">
          <div className="h-px w-[15px] bg-black" />
          <svg width="15" height="15" viewBox="0 0 15 15" fill="none" stroke="#111" className="ml-[66px]"><path d="M0.5 3.5h9v11h-9zM4 3V0.5h9v10h-3" /></svg>
          <svg width="16" height="16" viewBox="0 0 16 16" stroke="#111" className="ml-[66px] mr-[34px]"><path d="M0.5 0.5l15 15M15.5 0.5l-15 15" /></svg>
        </div>
      </div>
      <nav className="flex h-[51px] shrink-0 items-center gap-[24.5px] pl-3 text-[19.4px] text-white">
        {menus.map((m) => <span key={m}>{m}</span>)}
      </nav>
      <Toolbar />
      <div className="mt-[11px] flex h-[795px] shrink-0">
        <div className="ml-3 flex w-[416px] shrink-0 flex-col gap-[6px]">
          <FolderPanel />
          <TagPanel />
        </div>
        <CenterPane />
        <div className="ml-[7px] flex w-[359px] shrink-0 flex-col gap-[6px]">
          <ToolboxPanel />
          <StylesPanel />
        </div>
      </div>
      <StatusBar />
      <Taskbar />
    </div>
  );
}
